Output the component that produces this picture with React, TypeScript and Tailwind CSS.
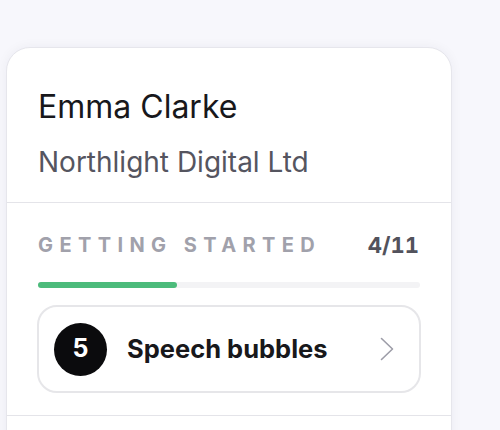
import React from 'react';

const progress = { done: 4, total: 11 };

const App: React.FC = () => {
  const pct = (progress.done / progress.total) * 100;

  return (
    <div className="min-h-[430px] h-[430px] overflow-hidden bg-[#f7f7fc] pl-[6px] pt-[47px] font-['Inter','Noto_Sans',sans-serif]">
      <div className="w-[446px] h-[500px] rounded-[24px] border border-[#e6e6ec] bg-white shadow-[0_0_12px_rgba(30,30,60,0.05)]">
        <div className="px-[31px] pt-[40px] pb-[23px] border-b border-[#e4e4e9]">
          <h1 className="text-[32px] leading-[38px] font-normal text-[#18181b]">Emma Clarke</h1>
          <p className="mt-[19px] text-[28px] leading-[34px] text-[#55555f]">Northlight Digital Ltd</p>
        </div>

        <div className="px-[31px] pt-[30px] pb-[22px] border-b border-[#e4e4e9]">
          <div className="flex items-center justify-between">
            <span className="text-[20px] leading-[24px] font-bold tracking-[0.32em] text-[#a1a1ab]">GETTING STARTED</span>
            <span className="mr-[1px] text-[22px] leading-[24px] font-bold tabular-nums text-[#52525c]">
              {progress.done}/{progress.total}
            </span>
          </div>

          <div className="mt-[25px] h-[6px] w-full rounded-full bg-[#f3f3f5]">
            <div className="h-full rounded-full bg-[#4cbb7b]" style={{ width: `${pct}%` }} />
          </div>

          <button className="-mx-[1px] mt-[17px] flex w-[calc(100%+2px)] h-[88px] items-center gap-[20px] rounded-[20px] border-2 border-[#e6e6e9] px-[15px] text-left">
            <span className="flex h-[53px] w-[53px] shrink-0 items-center justify-center rounded-full bg-[#0b0b0d] text-[25px] font-bold text-white">
              5
            </span>
            <span className="flex-1 text-[25.5px] font-bold text-[#18181b]">Speech bubbles</span>
            <svg className="mr-[10px] h-[24px] w-[14px]" viewBox="0 0 14 24" fill="none">
              <path d="M1.5 1.5 L12.5 12 L1.5 22.5" stroke="#9d9da8" strokeWidth="1.6" strokeLinecap="round" strokeLinejoin="round" />
            </svg>
          </button>
        </div>
      </div>
    </div>
  );
};

export default App;
